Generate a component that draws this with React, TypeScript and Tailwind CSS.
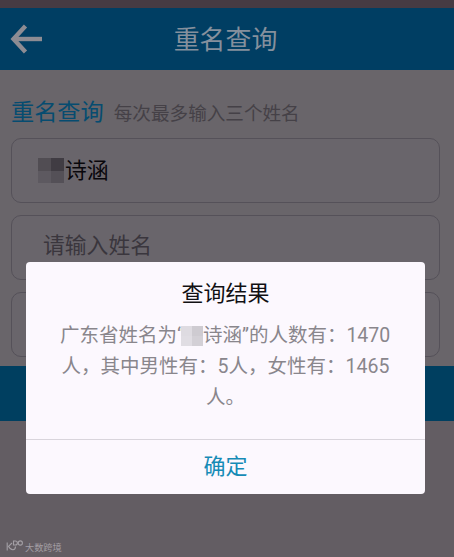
import type { ReactNode } from 'react';

const FONT = "font-['Roboto','Noto_Sans_CJK_SC',sans-serif]";

function BackArrow() {
  return (
    <svg className="absolute left-[10px] top-[15px] h-8 w-9" viewBox="0 0 36 32" fill="none" stroke="#8d8c93" strokeWidth="4.4">
      <path d="M32 16H4" />
      <path d="M15.5 3L3.5 16L15.5 29" />
    </svg>
  );
}

function Field({ children }: { children?: ReactNode }) {
  return (
    <div className="flex h-[65px] items-center rounded-[10px] border border-[#555159] bg-[#69656b] text-[21.8px] leading-none">
      {children}
    </div>
  );
}

/* Blurred-out surname in the first field */
function FieldMosaic() {
  return (
    <span className="ml-[26px] grid h-[25px] w-[26px] grid-cols-2 grid-rows-2">
      <span className="bg-[#514d53]" />
      <span className="bg-[#403c43]" />
      <span className="bg-[#5d5960]" />
      <span className="bg-[#545057]" />
    </span>
  );
}

/* Blurred-out surname in the result text, covers part of the opening quote */
function ResultMosaic() {
  return (
    <span className="-ml-[3px] grid h-5 w-[22px] grid-cols-2 grid-rows-2">
      <span className="bg-[#dedbe1]" />
      <span className="bg-[#cecbd1]" />
      <span className="bg-[#e0dde3]" />
      <span className="bg-[#d3d0d6]" />
    </span>
  );
}

function ResultDialog() {
  return (
    <div className="absolute left-[26px] top-[262px] flex h-[232px] w-[399px] flex-col rounded-[4px] bg-[#fcf8fe]">
      <div className="h-[178px] border-b border-[#d9d5dc]">
        <h2 className="pt-4 text-center text-[22px] leading-8 text-[#111013]">查询结果</h2>
        <div className="mt-[10px] text-[19.5px] leading-[31px] text-[#89868c]">
          <p className="flex h-[31px] items-center whitespace-nowrap pl-[34px]">
            <span>广东省姓名为“</span>
            <ResultMosaic />
            <span>诗涵”的人数有：1470</span>
          </p>
          <p className="whitespace-nowrap text-center">人，其中男性有：5人，女性有：1465</p>
          <p className="pl-[180px]">人。</p>
        </div>
      </div>
      <button className="flex-1 pb-px text-[22px] leading-8 text-[#168bb6]">确定</button>
    </div>
  );
}

function Watermark() {
  return (
    <div className="absolute left-[6px] top-[540px] flex items-start text-[#a39fa5]">
      <svg className="h-[12px] w-[19px]" viewBox="0 0 19 12" fill="none" stroke="currentColor" strokeWidth="1.1">
        <path d="M1.2 2.5V10.5M6 3L2.5 6.3Q4.5 10 7 9.8T9.5 6.5" />
        <path d="M7.5 1H9.3Q11.4 1 11.4 3T9.3 5H7.5Z" />
        <circle cx="14.3" cy="3" r="2.1" />
      </svg>
      <span className="pt-px text-[9.2px] leading-[13px]">大数跨境</span>
    </div>
  );
}

export default function App() {
  return (
    <div className={`relative h-[557px] w-[454px] overflow-hidden bg-[#635d63] ${FONT}`}>
      <div className="h-2 bg-[#463b43]" />
      <header className="relative flex h-[62px] items-center justify-center bg-[#003e63]">
        <BackArrow />
        <h1 className="pr-[3px] pt-[3px] text-[25.9px] leading-none text-[#85909d]">重名查询</h1>
      </header>

      <main className="h-[296px] bg-[#69656a] pl-[11px] pr-[14px] pt-[27px]">
        <div className="flex h-[31px] items-baseline leading-[31px]">
          <span className="text-[23.2px] text-[#064c70]">重名查询</span>
          <span className="ml-[10px] text-[18.6px] text-[#454147]">每次最多输入三个姓名</span>
        </div>
        <div className="mt-[10px] flex flex-col gap-3">
          <Field>
            <FieldMosaic />
            <span className="ml-px text-[#09070b]">诗涵</span>
          </Field>
          <Field>
            <span className="ml-[31px] pb-[3px] text-[#3a363d]">请输入姓名</span>
          </Field>
          <Field />
        </div>
      </main>
      <div className="h-[55px] bg-[#003f60]" />

      <ResultDialog />
      <Watermark />
    </div>
  );
}
